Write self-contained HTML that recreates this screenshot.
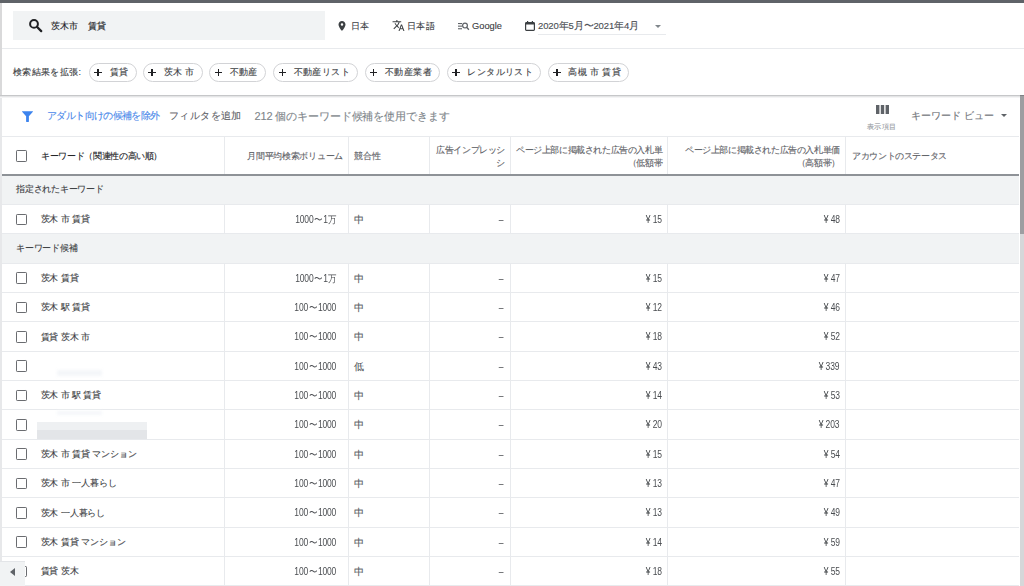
<!DOCTYPE html>
<html lang="ja">
<head>
<meta charset="utf-8">
<style>
*{margin:0;padding:0;box-sizing:border-box}
html,body{width:1024px;height:586px;overflow:hidden;background:#fff}
body{position:relative;font-family:"Liberation Sans",sans-serif;color:#3c4043;-webkit-text-stroke:.12px currentColor}
.abs{position:absolute}
.t{position:absolute;white-space:nowrap;line-height:1}
#topbar{left:0;top:0;width:1024px;height:3px;background:#5f6368}
#lstrip{left:0;top:3px;width:2px;height:583px;background:linear-gradient(#d9d9da 0,#d9d9da 92px,#e7e8ea 93px,#e7e8ea 100%)}
#search{left:13px;top:11px;width:312px;height:29px;background:#f1f3f4}
.hr{position:absolute;left:2px;width:1022px;height:1px;background:#e8eaed}
.chip{position:absolute;top:63px;height:18.8px;border:1px solid #d2d3d6;border-radius:10px;background:#fff}
.chip .pl{position:absolute;left:4.2px;top:5px;width:7.6px;height:7.6px}
.chip .pl:before{content:"";position:absolute;left:0;top:3px;width:7.4px;height:1.4px;background:#202124}
.chip .pl:after{content:"";position:absolute;left:3px;top:0;width:1.4px;height:7.4px;background:#202124}
.chip span{position:absolute;top:4.2px;left:19.3px;font-size:9px;letter-spacing:.4px;line-height:1;color:#3c4043;white-space:nowrap}
.vl{position:absolute;width:1px;background:#e8eaed}
.rowb{position:absolute;left:2px;width:1017px;height:1px;background:#e8eaed}
.grp{position:absolute;left:2px;width:1017px;background:#f1f3f4}
.cb{position:absolute;left:16px;width:11.2px;height:11.5px;border:1.8px solid #6a6c70;border-radius:1.2px}
.kw{position:absolute;left:40.6px;font-size:9px;letter-spacing:-.1px;line-height:1;color:#3c4043;white-space:nowrap}
.num{position:absolute;font-size:10px;letter-spacing:-.2px;line-height:1;color:#4a4d51;white-space:nowrap;text-align:right;transform:scaleX(.85);transform-origin:100% 50%;-webkit-text-stroke:0}
.cj{position:absolute;font-size:10px;line-height:1;color:#55595e;white-space:nowrap}
.tl{font-style:normal;margin:0 .9px}
.hd{position:absolute;font-size:9px;letter-spacing:-.4px;line-height:13px;color:#5f6368;white-space:nowrap}
.yn{font-style:normal;font-size:10px;letter-spacing:0;margin-right:2.6px;color:#3c4043}
</style>
</head>
<body>
<div id="topbar" class="abs"></div>
<div id="lstrip" class="abs"></div>

<!-- header row 1 -->
<div id="search" class="abs"></div>
<svg class="abs" style="left:28px;top:18px" width="15" height="15" viewBox="0 0 15 15"><circle cx="6" cy="5.9" r="3.9" fill="none" stroke="#202124" stroke-width="2"/><path d="M8.9 8.8L13.2 13.1" stroke="#202124" stroke-width="2.3" stroke-linecap="round"/></svg>
<div class="t" style="left:50.5px;top:22px;font-size:9px;letter-spacing:.3px;color:#202124">茨木市　<span style="-webkit-text-stroke:.2px #3c4043">賃貸</span></div>

<svg class="abs" style="left:336px;top:20px" width="12" height="12" viewBox="0 0 24 24"><path fill="#3c4043" d="M12 2C8.13 2 5 5.13 5 9c0 5.25 7 13 7 13s7-7.75 7-13c0-3.87-3.13-7-7-7zm0 9.5a2.5 2.5 0 0 1 0-5 2.5 2.5 0 0 1 0 5z"/></svg>
<div class="t" style="left:351px;top:22px;font-size:9px;letter-spacing:.3px;color:#3c4043">日本</div>

<svg class="abs" style="left:392px;top:19px" width="13" height="13" viewBox="0 0 24 24"><path fill="#3c4043" d="M12.87 15.07l-2.54-2.51.03-.03A17.52 17.52 0 0 0 14.07 6H17V4h-7V2H8v2H1v1.99h11.17C11.5 7.92 10.44 9.75 9 11.35 8.07 10.32 7.3 9.19 6.69 8h-2c.73 1.63 1.73 3.17 2.98 4.56l-5.09 5.02L4 19l5-5 3.11 3.11.76-2.04zM18.5 10h-2L12 22h2l1.12-3h4.75L21 22h2l-4.5-12zm-2.62 7l1.62-4.33L19.12 17h-3.24z"/></svg>
<div class="t" style="left:407px;top:21.5px;font-size:9px;letter-spacing:.4px;color:#3c4043">日本語</div>

<svg class="abs" style="left:457.5px;top:22px" width="12" height="9" viewBox="0 0 12 9"><g fill="#5f6368"><rect x="0" y="1" width="4" height="1.1"/><rect x="0" y="3.6" width="4" height="1.1"/><rect x="0" y="6.2" width="4" height="1.1"/><circle cx="7" cy="3.6" r="2.4" fill="none" stroke="#5f6368" stroke-width="1.2"/><path d="M8.6 5.3l2.3 2.5" stroke="#5f6368" stroke-width="1.3"/></g></svg>
<div class="t" style="left:472px;top:22px;font-size:9.3px;color:#3c4043">Google</div>

<svg class="abs" style="left:525px;top:21px" width="10" height="10" viewBox="0 0 10 10"><path fill="#3c4043" d="M2 0h1.2v1H6.8V0H8v1h.6C9.4 1 10 1.6 10 2.4v6.2C10 9.4 9.4 10 8.6 10H1.4C.6 10 0 9.4 0 8.6V2.4C0 1.6.6 1 1.4 1H2zM1.2 3.4v5.4h7.6V3.4z"/></svg>
<div class="t" style="left:538px;top:21px;font-size:9.5px;letter-spacing:-.12px;color:#4a4e53">2020年5月〜2021年4月</div>
<div class="abs" style="left:654.5px;top:24.5px;width:0;height:0;border-left:3px solid transparent;border-right:3px solid transparent;border-top:3px solid #80868b"></div>
<div class="abs" style="left:538px;top:34px;width:128px;height:1px;background:#e8eaed"></div>

<div class="hr" style="top:48px"></div>

<!-- refine row -->
<div class="t" style="left:13px;top:68px;font-size:9px;letter-spacing:.35px;color:#3c4043">検索結果を拡張:</div>
<div class="chip" style="left:89.3px;width:48.2px"><i class="pl"></i><span>賃貸</span></div>
<div class="chip" style="left:143.3px;width:59.5px"><i class="pl"></i><span>茨木 市</span></div>
<div class="chip" style="left:209.4px;width:56.9px"><i class="pl"></i><span>不動産</span></div>
<div class="chip" style="left:273.4px;width:84.7px"><i class="pl"></i><span>不動産リスト</span></div>
<div class="chip" style="left:364.7px;width:75.8px"><i class="pl"></i><span>不動産業者</span></div>
<div class="chip" style="left:447.2px;width:93.9px"><i class="pl"></i><span>レンタルリスト</span></div>
<div class="chip" style="left:548.1px;width:81.2px"><i class="pl"></i><span>高槻 市 賃貸</span></div>

<!-- shadow -->
<div class="abs" style="left:0;top:95px;width:1024px;height:1px;background:#c6c7c9"></div>
<div class="abs" style="left:0;top:96px;width:1024px;height:1px;background:#e4e5e6"></div>
<div class="abs" style="left:0;top:97px;width:1024px;height:1px;background:#f4f4f5"></div>

<!-- toolbar -->
<svg class="abs" style="left:22px;top:111px" width="11" height="11" viewBox="0 0 11 11"><path fill="#3d84ee" d="M0.3 0.2h10.4c.3 0 .4.3.2.5L6.9 5.3V10.6c0 .3-.2.4-.4.4H4.5c-.2 0-.4-.1-.4-.4V5.3L.1.7C-.1.5 0 .2.3.2z"/></svg>
<div class="t" style="left:47px;top:111px;font-size:10px;letter-spacing:-.62px;color:#4a88ea">アダルト向けの候補を除外</div>
<div class="t" style="left:169px;top:110.5px;font-size:10px;letter-spacing:.4px;color:#5f6368">フィルタを追加</div>
<div class="t" style="left:254.5px;top:110.5px;font-size:11px;letter-spacing:-.12px;color:#80868b">212 個のキーワード候補を使用できます</div>
<svg class="abs" style="left:876px;top:104.5px" width="13" height="9" viewBox="0 0 13 9"><g fill="#5f6368"><rect x="0" y="0" width="3.4" height="9"/><rect x="4.8" y="0" width="3.4" height="9"/><rect x="9.6" y="0" width="3.4" height="9"/></g></svg>
<div class="t" style="left:867px;top:122.5px;font-size:7px;letter-spacing:.26px;color:#9aa0a6">表示項目</div>
<div class="t" style="left:911px;top:110.5px;font-size:10px;letter-spacing:.08px;color:#6f7378">キーワード ビュー</div>
<div class="abs" style="left:1000.5px;top:114.3px;width:0;height:0;border-left:3px solid transparent;border-right:3px solid transparent;border-top:3.3px solid #5f6368"></div>

<!-- table -->
<div class="abs" style="left:2px;top:136px;width:1017px;height:1px;background:#e8eaed"></div>
<div id="tbl">
<div class="cb" style="top:150px"></div>
<div class="t" style="left:41px;top:151.6px;font-size:9px;letter-spacing:-.35px;-webkit-text-stroke:.12px #202124;color:#202124">キーワード（関連性の高い順）</div>
<div class="t" style="right:681px;top:152px;font-size:9px;letter-spacing:-.3px;color:#5f6368">月間平均検索ボリューム</div>
<div class="t" style="left:354px;top:152px;font-size:9px;color:#5f6368">競合性</div>
<div class="hd" style="right:519px;top:143.5px;text-align:right">広告インプレッシ<br>シ</div>
<div class="hd" style="right:361.8px;top:143.6px;text-align:right">ページ上部に掲載された広告の入札単<br>（低額帯</div>
<div class="hd" style="right:184.2px;top:143.6px;text-align:right">ページ上部に掲載された広告の入札単価<br>（高額帯）</div>
<div class="t" style="left:852px;top:151.5px;font-size:9px;letter-spacing:-.36px;color:#5f6368">アカウントのステータス</div>
<div class="vl" style="left:224px;top:136.5px;height:37.5px"></div>
<div class="vl" style="left:348px;top:136.5px;height:37.5px"></div>
<div class="vl" style="left:429px;top:136.5px;height:37.5px"></div>
<div class="vl" style="left:510px;top:136.5px;height:37.5px"></div>
<div class="vl" style="left:667px;top:136.5px;height:37.5px"></div>
<div class="vl" style="left:845px;top:136.5px;height:37.5px"></div>
<div class="abs" style="left:2px;top:174px;width:1017px;height:2px;background:#8e9297"></div>
<div class="grp" style="top:176.00px;height:28.50px"></div>
<div class="t" style="left:16px;top:185.45px;font-size:9px;letter-spacing:-.25px;color:#3c4043">指定されたキーワード</div>
<div class="rowb" style="top:204.00px"></div>
<div class="vl" style="left:224px;top:204.50px;height:29.33px"></div>
<div class="vl" style="left:348px;top:204.50px;height:29.33px"></div>
<div class="vl" style="left:429px;top:204.50px;height:29.33px"></div>
<div class="vl" style="left:510px;top:204.50px;height:29.33px"></div>
<div class="vl" style="left:667px;top:204.50px;height:29.33px"></div>
<div class="vl" style="left:845px;top:204.50px;height:29.33px"></div>
<div class="cb" style="top:213.77px"></div>
<div class="kw" style="top:215.27px">茨木 市 賃貸</div>
<div class="num" style="right:687.5px;top:214.97px">1000<i class="tl">〜</i>1万</div>
<div class="cj" style="left:354px;top:214.97px">中</div>
<div class="num" style="right:520.5px;top:214.97px">–</div>
<div class="num" style="right:362px;top:214.97px"><i class="yn">¥</i>15</div>
<div class="num" style="right:184.5px;top:214.97px"><i class="yn">¥</i>48</div>
<div class="rowb" style="top:233.33px"></div>
<div class="grp" style="top:233.83px;height:29.33px"></div>
<div class="t" style="left:16px;top:243.70px;font-size:9px;letter-spacing:-.25px;color:#3c4043">キーワード候補</div>
<div class="rowb" style="top:262.67px"></div>
<div class="vl" style="left:224px;top:263.17px;height:29.33px"></div>
<div class="vl" style="left:348px;top:263.17px;height:29.33px"></div>
<div class="vl" style="left:429px;top:263.17px;height:29.33px"></div>
<div class="vl" style="left:510px;top:263.17px;height:29.33px"></div>
<div class="vl" style="left:667px;top:263.17px;height:29.33px"></div>
<div class="vl" style="left:845px;top:263.17px;height:29.33px"></div>
<div class="cb" style="top:272.43px"></div>
<div class="kw" style="top:273.93px">茨木 賃貸</div>
<div class="num" style="right:687.5px;top:273.63px">1000<i class="tl">〜</i>1万</div>
<div class="cj" style="left:354px;top:273.63px">中</div>
<div class="num" style="right:520.5px;top:273.63px">–</div>
<div class="num" style="right:362px;top:273.63px"><i class="yn">¥</i>15</div>
<div class="num" style="right:184.5px;top:273.63px"><i class="yn">¥</i>47</div>
<div class="rowb" style="top:292.00px"></div>
<div class="vl" style="left:224px;top:292.50px;height:29.33px"></div>
<div class="vl" style="left:348px;top:292.50px;height:29.33px"></div>
<div class="vl" style="left:429px;top:292.50px;height:29.33px"></div>
<div class="vl" style="left:510px;top:292.50px;height:29.33px"></div>
<div class="vl" style="left:667px;top:292.50px;height:29.33px"></div>
<div class="vl" style="left:845px;top:292.50px;height:29.33px"></div>
<div class="cb" style="top:301.77px"></div>
<div class="kw" style="top:303.27px">茨木 駅 賃貸</div>
<div class="num" style="right:687.5px;top:302.97px">100<i class="tl">〜</i>1000</div>
<div class="cj" style="left:354px;top:302.97px">中</div>
<div class="num" style="right:520.5px;top:302.97px">–</div>
<div class="num" style="right:362px;top:302.97px"><i class="yn">¥</i>12</div>
<div class="num" style="right:184.5px;top:302.97px"><i class="yn">¥</i>46</div>
<div class="rowb" style="top:321.33px"></div>
<div class="vl" style="left:224px;top:321.83px;height:29.33px"></div>
<div class="vl" style="left:348px;top:321.83px;height:29.33px"></div>
<div class="vl" style="left:429px;top:321.83px;height:29.33px"></div>
<div class="vl" style="left:510px;top:321.83px;height:29.33px"></div>
<div class="vl" style="left:667px;top:321.83px;height:29.33px"></div>
<div class="vl" style="left:845px;top:321.83px;height:29.33px"></div>
<div class="cb" style="top:331.10px"></div>
<div class="kw" style="top:332.60px">賃貸 茨木 市</div>
<div class="num" style="right:687.5px;top:332.30px">100<i class="tl">〜</i>1000</div>
<div class="cj" style="left:354px;top:332.30px">中</div>
<div class="num" style="right:520.5px;top:332.30px">–</div>
<div class="num" style="right:362px;top:332.30px"><i class="yn">¥</i>18</div>
<div class="num" style="right:184.5px;top:332.30px"><i class="yn">¥</i>52</div>
<div class="rowb" style="top:350.66px"></div>
<div class="vl" style="left:224px;top:351.16px;height:29.33px"></div>
<div class="vl" style="left:348px;top:351.16px;height:29.33px"></div>
<div class="vl" style="left:429px;top:351.16px;height:29.33px"></div>
<div class="vl" style="left:510px;top:351.16px;height:29.33px"></div>
<div class="vl" style="left:667px;top:351.16px;height:29.33px"></div>
<div class="vl" style="left:845px;top:351.16px;height:29.33px"></div>
<div class="cb" style="top:360.43px"></div>
<div class="num" style="right:687.5px;top:361.63px">100<i class="tl">〜</i>1000</div>
<div class="cj" style="left:354px;top:361.63px">低</div>
<div class="num" style="right:520.5px;top:361.63px">–</div>
<div class="num" style="right:362px;top:361.63px"><i class="yn">¥</i>43</div>
<div class="num" style="right:184.5px;top:361.63px"><i class="yn">¥</i>339</div>
<div class="rowb" style="top:380.00px"></div>
<div class="vl" style="left:224px;top:380.50px;height:29.33px"></div>
<div class="vl" style="left:348px;top:380.50px;height:29.33px"></div>
<div class="vl" style="left:429px;top:380.50px;height:29.33px"></div>
<div class="vl" style="left:510px;top:380.50px;height:29.33px"></div>
<div class="vl" style="left:667px;top:380.50px;height:29.33px"></div>
<div class="vl" style="left:845px;top:380.50px;height:29.33px"></div>
<div class="cb" style="top:389.76px"></div>
<div class="kw" style="top:391.26px">茨木 市 駅 賃貸</div>
<div class="num" style="right:687.5px;top:390.96px">100<i class="tl">〜</i>1000</div>
<div class="cj" style="left:354px;top:390.96px">中</div>
<div class="num" style="right:520.5px;top:390.96px">–</div>
<div class="num" style="right:362px;top:390.96px"><i class="yn">¥</i>14</div>
<div class="num" style="right:184.5px;top:390.96px"><i class="yn">¥</i>53</div>
<div class="rowb" style="top:409.33px"></div>
<div class="vl" style="left:224px;top:409.83px;height:29.33px"></div>
<div class="vl" style="left:348px;top:409.83px;height:29.33px"></div>
<div class="vl" style="left:429px;top:409.83px;height:29.33px"></div>
<div class="vl" style="left:510px;top:409.83px;height:29.33px"></div>
<div class="vl" style="left:667px;top:409.83px;height:29.33px"></div>
<div class="vl" style="left:845px;top:409.83px;height:29.33px"></div>
<div class="cb" style="top:419.10px"></div>
<div class="num" style="right:687.5px;top:420.30px">100<i class="tl">〜</i>1000</div>
<div class="cj" style="left:354px;top:420.30px">中</div>
<div class="num" style="right:520.5px;top:420.30px">–</div>
<div class="num" style="right:362px;top:420.30px"><i class="yn">¥</i>20</div>
<div class="num" style="right:184.5px;top:420.30px"><i class="yn">¥</i>203</div>
<div class="rowb" style="top:438.66px"></div>
<div class="vl" style="left:224px;top:439.16px;height:29.33px"></div>
<div class="vl" style="left:348px;top:439.16px;height:29.33px"></div>
<div class="vl" style="left:429px;top:439.16px;height:29.33px"></div>
<div class="vl" style="left:510px;top:439.16px;height:29.33px"></div>
<div class="vl" style="left:667px;top:439.16px;height:29.33px"></div>
<div class="vl" style="left:845px;top:439.16px;height:29.33px"></div>
<div class="cb" style="top:448.43px"></div>
<div class="kw" style="top:449.93px">茨木 市 賃貸 マンション</div>
<div class="num" style="right:687.5px;top:449.63px">100<i class="tl">〜</i>1000</div>
<div class="cj" style="left:354px;top:449.63px">中</div>
<div class="num" style="right:520.5px;top:449.63px">–</div>
<div class="num" style="right:362px;top:449.63px"><i class="yn">¥</i>15</div>
<div class="num" style="right:184.5px;top:449.63px"><i class="yn">¥</i>54</div>
<div class="rowb" style="top:468.00px"></div>
<div class="vl" style="left:224px;top:468.50px;height:29.33px"></div>
<div class="vl" style="left:348px;top:468.50px;height:29.33px"></div>
<div class="vl" style="left:429px;top:468.50px;height:29.33px"></div>
<div class="vl" style="left:510px;top:468.50px;height:29.33px"></div>
<div class="vl" style="left:667px;top:468.50px;height:29.33px"></div>
<div class="vl" style="left:845px;top:468.50px;height:29.33px"></div>
<div class="cb" style="top:477.76px"></div>
<div class="kw" style="top:479.26px">茨木 市 一人暮らし</div>
<div class="num" style="right:687.5px;top:478.96px">100<i class="tl">〜</i>1000</div>
<div class="cj" style="left:354px;top:478.96px">中</div>
<div class="num" style="right:520.5px;top:478.96px">–</div>
<div class="num" style="right:362px;top:478.96px"><i class="yn">¥</i>13</div>
<div class="num" style="right:184.5px;top:478.96px"><i class="yn">¥</i>47</div>
<div class="rowb" style="top:497.33px"></div>
<div class="vl" style="left:224px;top:497.83px;height:29.33px"></div>
<div class="vl" style="left:348px;top:497.83px;height:29.33px"></div>
<div class="vl" style="left:429px;top:497.83px;height:29.33px"></div>
<div class="vl" style="left:510px;top:497.83px;height:29.33px"></div>
<div class="vl" style="left:667px;top:497.83px;height:29.33px"></div>
<div class="vl" style="left:845px;top:497.83px;height:29.33px"></div>
<div class="cb" style="top:507.10px"></div>
<div class="kw" style="top:508.60px">茨木 一人暮らし</div>
<div class="num" style="right:687.5px;top:508.30px">100<i class="tl">〜</i>1000</div>
<div class="cj" style="left:354px;top:508.30px">中</div>
<div class="num" style="right:520.5px;top:508.30px">–</div>
<div class="num" style="right:362px;top:508.30px"><i class="yn">¥</i>13</div>
<div class="num" style="right:184.5px;top:508.30px"><i class="yn">¥</i>49</div>
<div class="rowb" style="top:526.66px"></div>
<div class="vl" style="left:224px;top:527.16px;height:29.33px"></div>
<div class="vl" style="left:348px;top:527.16px;height:29.33px"></div>
<div class="vl" style="left:429px;top:527.16px;height:29.33px"></div>
<div class="vl" style="left:510px;top:527.16px;height:29.33px"></div>
<div class="vl" style="left:667px;top:527.16px;height:29.33px"></div>
<div class="vl" style="left:845px;top:527.16px;height:29.33px"></div>
<div class="cb" style="top:536.43px"></div>
<div class="kw" style="top:537.93px">茨木 賃貸 マンション</div>
<div class="num" style="right:687.5px;top:537.63px">100<i class="tl">〜</i>1000</div>
<div class="cj" style="left:354px;top:537.63px">中</div>
<div class="num" style="right:520.5px;top:537.63px">–</div>
<div class="num" style="right:362px;top:537.63px"><i class="yn">¥</i>14</div>
<div class="num" style="right:184.5px;top:537.63px"><i class="yn">¥</i>59</div>
<div class="rowb" style="top:556.00px"></div>
<div class="vl" style="left:224px;top:556.50px;height:29.33px"></div>
<div class="vl" style="left:348px;top:556.50px;height:29.33px"></div>
<div class="vl" style="left:429px;top:556.50px;height:29.33px"></div>
<div class="vl" style="left:510px;top:556.50px;height:29.33px"></div>
<div class="vl" style="left:667px;top:556.50px;height:29.33px"></div>
<div class="vl" style="left:845px;top:556.50px;height:29.33px"></div>
<div class="cb" style="top:565.76px"></div>
<div class="kw" style="top:567.26px">賃貸 茨木</div>
<div class="num" style="right:687.5px;top:566.96px">100<i class="tl">〜</i>1000</div>
<div class="cj" style="left:354px;top:566.96px">中</div>
<div class="num" style="right:520.5px;top:566.96px">–</div>
<div class="num" style="right:362px;top:566.96px"><i class="yn">¥</i>18</div>
<div class="num" style="right:184.5px;top:566.96px"><i class="yn">¥</i>55</div>
<div class="rowb" style="top:585.33px"></div>
<div class="abs" style="left:57px;top:370px;width:45px;height:6px;background:#f4f6f9;filter:blur(1.5px)"></div>
<div class="abs" style="left:57px;top:411px;width:45px;height:4px;background:#f5f7fa;filter:blur(1.5px)"></div>
<div class="abs" style="left:36.5px;top:422px;width:110px;height:8px;background:#eef0f2"></div>
<div class="abs" style="left:36.5px;top:430px;width:110px;height:9px;background:#e3e5e8"></div>
</div>
<!-- scrollbar -->
<div class="abs" style="left:1020px;top:95px;width:4px;height:491px;background:#d6d7d9"></div>
<div class="abs" style="left:1020px;top:95px;width:4px;height:139px;background:#9d9ea1;border-top:1px solid #7f8083"></div>

<!-- scroll left button -->
<div class="abs" style="left:0;top:561px;width:25px;height:25px;background:#f1f3f4;border-top:1px solid #e3e5e8"></div>
<div class="abs" style="left:10px;top:568px;width:0;height:0;border-top:4.5px solid transparent;border-bottom:4.5px solid transparent;border-right:5px solid #5f6368"></div>
</body>
</html>
